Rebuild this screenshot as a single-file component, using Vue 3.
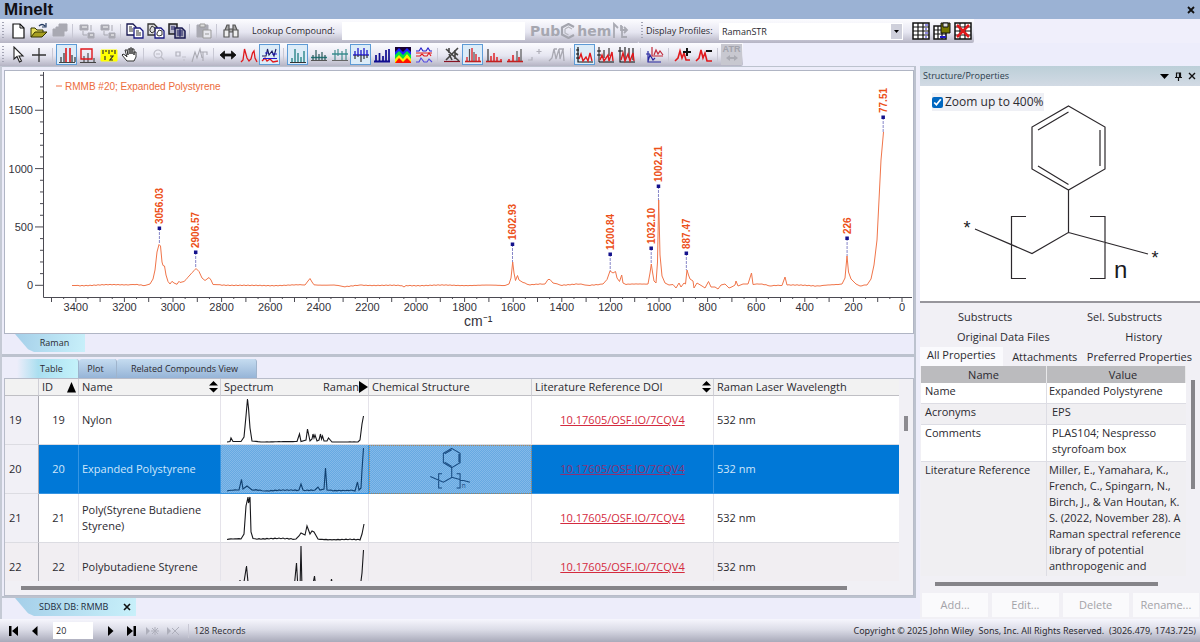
<script setup>
import { ref } from 'vue'

// ---- toolbar icons: each is a list of [path, stroke, fill, stroke width] on an 18 x 18 grid ----
const K = '#111', R = '#e0181c', B = '#2018c8', T = '#1d7f80', G = '#a9a9b2'
const base = (c = '#444') => ['M1 16.5H17', c, 'none', 1]
const icons = {
  new: [['M4 2H11L15 6V16H4Z', K, '#fff', 1.2], ['M11 2V6H15', K, 'none', 1]],
  open: [['M1 15V6H5L7 8H13V11', '#333300', '#e8e060', 1], ['M1 15L5 10H17L12 15Z', '#333300', '#a8a020', 1], ['M9 4Q12 1 15 4M16 1V5H12', '#203860', 'none', 1.2]],
  saveAll: [['M8 2H16V9H13V14H2V7H5V5H8Z', G, G, 1]],
  tree: [['M2 3H10V8H2ZM10 11H16V16H10Z', G, G, 1], ['M13 3V9M5 9V13H9', G, 'none', 1], ['M4 5H9M12 13H15', '#fff', 'none', 1]],
  copy: [['M1 2H7L10 5V13H1Z', '#181850', '#fff', 1.3], ['M8 6H14L17 9V16H8Z', '#181880', '#fff', 1.3], ['M3 5H6M3 7H7M3 9H7M10 9H13M10 11H15M10 13H15', '#333', 'none', 1]],
  copyRound: [['M1 2H7L10 5V13H1Z', '#333', '#ddd', 1.3], ['M8 6H14L17 9V16H8Z', '#181880', '#fff', 1.3], ['M3 7L5 4L8 6V9L5 11L3 9ZM10 11L12 8L15 9V13L12 14L10 13Z', '#333', 'none', 1]],
  copyTable: [['M1 2H9V12H1Z', '#222', '#bbc', 1.5], ['M7 6H14L17 9V16H7Z', '#181850', '#aab', 1.5], ['M3 5H7M3 7H7M9 9H15M9 11H15M9 13H15M12 7V15', '#181860', 'none', 1]],
  paste: [['M2 3H13V15H2Z', G, G, 1], ['M8 8H16V16H8Z', '#999', '#e8e8ee', 1], ['M5 2H10V5H5ZM10 12H14', '#999', '#ddd', 1]],
  find: [['M3 8L5 3H7V8M11 8V3H13L15 8M7 7H11V10H7', '#555', '#aaa', 1.2], ['M2 8H7V15H2ZM11 8H16V15H11Z', '#555', '#eee', 1.2]],
  gridView: [['M1 1H17V17H1Z', K, '#fff', 1.5], ['M1 5H17M1 9H17M1 13H17M6 1V17M11 1V17', K, 'none', 1.2], ['M13 3H16M13 7H15M13 11H16M13 15H15', B, 'none', 1.2]],
  gridSave: [['M1 4H13V17H1Z', K, '#fff', 1.5], ['M1 8H13M1 12H13M5 4V17M9 4V17', K, 'none', 1.2], ['M8 1H17V11H8Z', K, '#777700', 1], ['M10 1H15V5H10Z', K, '#ddd', 1], ['M7 15H13', B, 'none', 2]],
  gridDelete: [['M1 1H17V17H1Z', K, '#fff', 1.5], ['M1 5H17M1 9H17M1 13H17M6 1V17M11 1V17', K, 'none', 1.2], ['M3 3L15 15M15 3L3 15', R, 'none', 2.5]],
  pointer: [['M5 1V13L8 10.500L10.500 16L12.500 15L10 10H14Z', '#222', '#fff', 1.1]],
  cross: [['M9 2V16M2 9H16', '#333', 'none', 1.3]],
  barsRed: [base(), ['M3 16V11M6 16V7M14 16V9M17 16V11', '#333', 'none', 1.2], ['M8 16V2M12 16V2', R, 'none', 1.6]],
  barsBox: [base(), ['M5 16V10M9 16V7M15 16V12', '#333', 'none', 1], ['M2 3H13V13H2Z', R, 'none', 1.4]],
  ruler: [['M1 4H17V15H1Z', '#ffff00', '#ffff00', 1], ['M3 4V8M6 4V6M9 4V8M12 4V6M15 4V8M5 10V14M10 10H13L10 14H13', '#333', 'none', 1.2]],
  hand: [['M4 9L2 8L1 9L6 15H13L15 11V6H13V9V3H11V8V2H9V8V3H7V9L6 4H4L6 11Z', '#333', '#fff', 1]],
  zoomOut: [['M5 8A4 4 0 1 0 13 8A4 4 0 1 0 5 8M12 11L15 14M7 8H11', '#bcbcc6', 'none', 1.2]],
  small: [['M6 6H10V10H6Z', '#b2b2bd', 'none', 1.2], ['M12 11H16M14 13V15', '#c2c2cb', 'none', 1.2]],
  waveGrey: [['M1 16L4 6L6 12L9 3L11 12M9 6H16V9M12 6V15', G, 'none', 1.1]],
  arrows: [['M1 9L5.500 5V8H12.500V5L17 9L12.500 13V10H5.500V13Z', K, K, 0.8]],
  waveRed: [['M1 16L3 14L4.500 3L7 12L9 15L11 13L12.500 7L14 5L15 12L17 16', R, 'none', 1.3]],
  waveMix: [['M1 15L4 12L6 15L9 13L12 16L17 15', R, 'none', 1.3], ['M1 10H5L6.500 3L8 9L11 5L13 10L15 3', '#181860', 'none', 1.1], ['M2 12.500H16M4 7H7M11 8H16', B, 'none', 1.2]],
  barsTeal: [base('#333'), ['M3 16V12M6 16V3M9 16V7M12 16V11M15 16V5', T, 'none', 1.3]],
  barsMid: [['M1 11.500H17', T, 'none', 1.4], ['M3 14V9M6 14V4M9 14V8M12 14V6M15 14V9', '#285858', 'none', 1.2], ['M1 14.500H17', '#555', 'none', 1]],
  barsDown: [['M1 8H17', T, 'none', 1.3], ['M4 4V14M7 3V10M11 5V15M15 3V14', '#3a8788', 'none', 1.1], ['M1 14.500H17', '#666', 'none', 1]],
  barsBlue: [['M1 9H17', B, 'none', 1.4], ['M3 5V9M6 2V9M9 4V9M12 2V9M15 4V9', B, 'none', 1.3], ['M3 9V13M6 9V11M9 9V16M12 9V13M15 9V12', '#333', 'none', 1.2]],
  barsNavy: [['M1 15.500H17', '#100c90', 'none', 2], ['M3 15V9M6.500 15V7M10 15V10M13 15V4M16 15V3', '#100c90', 'none', 1.7]],
  heat: [['M1 1H17V17H1Z', 'none', '#180030', 0], ['M1 17V6L5 2L9 6L13 2L17 6V17Z', 'none', '#2020ff', 0], ['M1 17V9L5 5L9 9L13 5L17 9V17Z', 'none', '#00e040', 0], ['M1 17V13L5 9L9 13L13 8L17 13V17Z', 'none', '#ffee00', 0], ['M1 17L5 12L9 16L13 12L17 16V17Z', 'none', '#ff1000', 0]],
  stack: [['M1 5H4L6 2L8 5H11L13 2L15 5H17', B, 'none', 1.1], ['M1 10H5L7 8L9 10H12L14 7L16 10', R, 'none', 1.2], ['M1 7H17', R, 'none', 1], ['M1 16H4L6 12L9 16H12L14 13L17 16', '#5048e0', 'none', 1.1]],
  noPeaks: [['M1 15.500H17', '#812', 'none', 1.2], ['M3 3L16 15M15 2L3 14M6 2V7M12 7L15 9M6 8L9 14M12 4V13', '#444', 'none', 1.6]],
  peaks1: [['M1 15.500H17', '#c02020', 'none', 1.6], ['M3 15V11M8 15V2M12 15V8M15 15V11', R, 'none', 1.3], ['M5.500 15V3M10 15V6', '#555', 'none', 1.2]],
  peaks2: [['M1 15.500H17', '#c02020', 'none', 1.6], ['M3 15V3', '#333', 'none', 1.2], ['M6 15V10M9 15V7M12 15V11M16 15V13', R, 'none', 1.4]],
  peaks3: [['M1 15.500H17', '#c02020', 'none', 1.6], ['M15 15V3M11 15V5', '#555', 'none', 1.2], ['M3 15V13M7 15V9M13 15V11', R, 'none', 1.5]],
  dotGrey: [['M1 14H5V11M12 3V8M9.500 5.500H14.500', '#b0b0ba', 'none', 1.2]],
  wavesGrey: [['M1 15L4 12L6 3L8 13L11 3L12 13L15 3L16 15M6 3H9M11 3H16', G, 'none', 1.3]],
  scale1: [['M2 1V16H17', K, 'none', 1.2], ['M3 13L5 8L7 15L10 11L12 15L14 7L16 15', R, 'none', 1.4], ['M0 4H3M0 8H3M0 12H3', K, 'none', 1]],
  scale2: [['M2 1V16H17M0 5H4M0 9H4M7 4V12M12 2V10', K, 'none', 1], ['M3 14L5 9L7 15L11 9L12 15L15 6L16 15', R, 'none', 1.4]],
  scale3: [['M2 1V16H17M0 5H5M7 1V13M11 2V12M15 2V14', K, 'none', 1.1], ['M3 14L5 7L7 15L10 8L12 15L15 7L16 15', R, 'none', 1.4]],
  offset: [['M2 5V16H15M2 15L4 9L7 14L9 12M0 8H4', '#2828a0', 'none', 1.2], ['M6 1V10H17M8 9L10 4L12 8L14 5L17 9', '#c02838', 'none', 1.2]],
  addWave: [['M1 15L4 12L6 5L8 12L10 7L12 14H16', R, 'none', 1.6], ['M13 2V10M9 6H17', K, 'none', 2]],
  subWave: [['M1 15L4 12L6 4L8 12L10 7L12 15H17', R, 'none', 1.6], ['M11 5H17', K, 'none', 2]],
}
const topFile = [
  [['New', 'new'], ['Open', 'open'], ['Save all', 'saveAll', 1]],
  [['Expand', 'tree', 1], ['Collapse', 'tree', 1]],
  [['Copy', 'copy'], ['Copy structure', 'copyRound'], ['Copy table', 'copyTable']],
  [['Paste', 'paste', 1]],
  [['Find', 'find']],
]
const topGrid = [['Edit profile', 'gridView'], ['Save profile', 'gridSave'], ['Delete profile', 'gridDelete']]
const tools = [
  [['Select', 'pointer'], ['Crosshair', 'cross']],
  [['Zoom x', 'barsRed', 0, 1], ['Zoom box', 'barsBox'], ['Peak labels', 'ruler'], ['Pan', 'hand']],
  [['Zoom out', 'zoomOut', 1], ['Zoom region', 'small', 1], ['Full range', 'waveGrey', 1]],
  [['Fit width', 'arrows'], ['Spectrum', 'waveRed'], ['Overlay spectra', 'waveMix', 0, 1]],
  [['Bars', 'barsTeal', 0, 1], ['Bars mid', 'barsMid'], ['Bars down', 'barsDown'], ['Mirror', 'barsBlue', 0, 1], ['Solid bars', 'barsNavy'], ['Heat map', 'heat'], ['Stack', 'stack']],
  [['Hide peaks', 'noPeaks'], ['All peaks', 'peaks1', 0, 1], ['Left peaks', 'peaks2'], ['Right peaks', 'peaks3'], ['Add peak', 'dotGrey', 1], ['Match peaks', 'wavesGrey', 1]],
  [['Scale common', 'scale1', 0, 1], ['Scale each', 'scale2'], ['Scale all', 'scale3']],
  [['Offset', 'offset']],
  [['Add spectrum', 'addWave'], ['Remove spectrum', 'subWave']],
]

// ---- chart ----
const px = (v) => 902 - v * 0.243
const py = (v) => 285.3 - v * 0.1167
const xTicks = Array.from({ length: 71 }, (_, i) => i * 50)
const yTicks = Array.from({ length: 19 }, (_, i) => i * 100)
const xLabels = Array.from({ length: 18 }, (_, i) => i * 200)
const yLabels = [0, 500, 1000, 1500]
const peaks = [
  ['3056.03', 3056, 228, 244], ['2906.57', 2906.6, 252, 268], ['1602.93', 1602.9, 244, 262],
  ['1200.84', 1200.8, 254, 271], ['1032.10', 1032.1, 248, 264], ['1002.21', 1002.2, 186, 201],
  ['887.47', 887.5, 253, 270], ['226', 226, 238, 256], ['77.51', 77.5, 117, 132],
]
const trace = [
  72, 285.5, 76, 285.5, 133, 284.5, 145, 285.5, 150, 284, 153, 279, 155, 270, 157, 252, 159, 244.5, 160.5, 246, 162, 262, 163, 265.5, 164.5, 266,
  166, 275, 168, 281.5, 170, 284, 172, 281.3, 174, 283, 177, 284.3, 179, 281.3, 180, 282.5, 184, 281.5, 190, 275, 196, 268.5, 199, 271.5, 202, 278,
  205, 280.5, 209, 277.5, 211, 280, 213, 284.5, 218, 284.7, 250, 285.7, 305, 285, 308, 281, 310, 278.5, 312, 282, 314, 284.8, 334, 285, 343, 286.5,
  360, 285, 402, 285.7, 404, 287, 406, 285.5, 440, 285.3, 480, 285.3, 505, 285.5, 509, 284, 511, 278, 512.7, 262, 514, 273, 515.5, 280.5, 517.5, 275.5, 519, 280,
  523, 282.5, 530, 285, 545, 284, 548, 279.5, 550, 279.5, 553, 283, 560, 285, 581, 284, 590, 285.5, 603, 284, 607, 279.5, 610, 271, 613, 273,
  615.5, 271.5, 617, 278, 619.5, 281.5, 621.7, 275, 623, 283, 626, 284.5, 648, 284, 650, 273, 651.3, 264, 652.5, 272, 654, 281, 656, 283, 657.5, 262,
  658.7, 200, 660, 255, 662, 276, 665, 283, 669, 285, 673, 284.5, 676, 288, 679, 283, 681, 287, 684, 283, 685.5, 284, 687, 270, 688.5, 275, 690, 279,
  693, 281, 694, 288, 697, 283, 702, 286, 705, 288, 708.5, 281.5, 711, 287, 715, 287, 718, 289, 721, 285, 725, 284, 729, 288, 735, 285, 736, 281, 738, 286, 743, 284,
  748, 284, 751.5, 273, 753, 284.5, 762, 284, 770, 286, 782, 285.5, 785, 277, 787, 285, 820, 286, 842, 284, 845, 278, 847, 256, 848.5, 272, 851, 279,
  856, 284, 860, 286, 867, 285, 871, 279, 874, 265, 877, 240, 879, 200, 881, 160, 883.5, 132,
]
const noisy = (pts, amp) => {
  const out = []
  for (let i = 0; i < pts.length; i += 2) {
    const [x, y, nx, ny] = [pts[i], pts[i + 1], pts[i + 2], pts[i + 3]]
    out.push(`${x},${y}`)
    if (nx - x > 5) {
      for (let q = x + 2; q < nx - 1; q += 2) {
        const mid = y + ((ny - y) * (q - x)) / (nx - x)
        out.push(`${q},${(mid + amp * Math.sin(q * 2.3) * Math.cos(q * 0.71)).toFixed(2)}`)
      }
    }
  }
  return out.join(' ')
}
const traceLine = noisy(trace, 0.6)

// ---- results ----
const rows = [
  { id: 19, name: 'Nylon', s: [6, 46, 9, 45.5, 10, 42, 12, 45.5, 20, 45.5, 23, 41, 25, 20, 26.5, 3, 27.5, 12, 29, 32, 31, 45, 40, 46, 76, 45.5, 78.5, 38, 80, 45.5, 85, 44, 86.5, 33, 89, 45, 91, 43, 92, 38, 93, 42, 94, 39, 96, 45, 98, 44, 99.5, 38, 100.5, 43, 101.5, 40, 103, 45, 106, 45, 107.5, 42, 111, 46, 137, 46, 139, 44, 141, 28, 142.5, 20], n: 0.1 },
  { id: 20, name: 'Expanded Polystyrene', s: [6, 46, 18, 45, 20.5, 34.5, 22, 44, 26, 41, 31, 45, 44, 46, 78, 45, 80, 39, 82, 45, 94, 45, 97, 42, 99, 45, 103, 44, 104.5, 23, 106, 45, 112, 46, 130, 45, 134, 46, 136.5, 37, 138, 45, 140, 43, 141, 25, 142.5, 3], n: 0.7, sel: 1 },
  { id: 21, name: 'Poly(Styrene Butadiene Styrene)', s: [6, 45.5, 20, 45, 23, 40, 25, 12, 27, 3, 27.5, 9, 29, 3, 30, 38, 32, 44.5, 75, 45, 78, 42, 80, 39, 84, 41, 86, 32, 89, 40, 91, 37, 93, 38, 97, 45, 139, 46, 141, 40, 143, 30], n: 0.8 },
  { id: 22, name: 'Polybutadiene Styrene', s: [6, 46, 18, 44, 19, 37, 20, 44, 23, 39, 25.5, 23, 27, 39, 29, 46, 73, 46, 75.5, 20, 77, 46, 79, 46, 80, 3, 81, 46, 91, 46, 93.5, 33, 95, 46, 109, 46, 110.5, 36, 112, 46, 139, 46, 141, 30, 142.5, 7], n: 0.3 },
].map((r) => ({ ...r, line: noisy(r.s, r.n) }))

const bonds = 'M1068.500 106L1105 127V169L1068.500 190L1032 169V127ZM1038 130L1068.500 112M1100 130V166M1038 166L1068.500 184.500M1068.500 190V232.500L1032 253.500L975 229M1068.500 232.500L1148 254M1026 216.500H1011.500V278.500H1026M1090 216.500H1105V278.500H1090'

const props = [
  { k: 'Name', v: 'Expanded Polystyrene' },
  { k: 'Acronyms', v: 'EPS', inset: 1 },
  { k: 'Comments', v: 'PLAS104; Nespresso\nstyrofoam box', inset: 1 },
  { k: 'Literature Reference', v: 'Miller, E., Yamahara, K.,\nFrench, C., Spingarn, N.,\nBirch, J., & Van Houtan, K.\nS. (2022, November 28). A\nRaman spectral reference\nlibrary of potential\nanthropogenic and' },
]
const zoomed = ref(true)
const lookup = ref('')
const record = ref('20')
const profile = ref('RamanSTR')
</script>

<template>
  <div class="app">
    <header class="titlebar">
      <h1>MineIt</h1>
      <button class="plain" aria-label="Close window"><svg width="8" height="8" viewBox="0 0 8 8"><path d="M1 1L7 7M7 1L1 7" stroke="#111" stroke-width="1.8" /></svg></button>
    </header>

    <div class="bar">
      <div class="strip file">
        <i class="grip"></i>
        <template v-for="(g, gi) in topFile" :key="gi">
          <i v-if="gi" class="sep"></i>
          <button v-for="b in g" :key="b[0]" class="tool" :aria-label="b[0]" :disabled="!!b[2]">
            <svg width="18" height="18" viewBox="0 0 18 18"><path v-for="(p, i) in icons[b[1]]" :key="i" :d="p[0]" :stroke="p[1]" :fill="p[2]" :stroke-width="p[3]" /></svg>
          </button>
        </template>
        <label class="lookup-label" for="lookup">Lookup Compound:</label>
        <input id="lookup" v-model="lookup" class="lookup" type="text" />
        <button class="pubchem" disabled aria-label="PubChem">
          <span>Pub</span>
          <svg width="17" height="16" viewBox="0 0 17 16"><path d="M14 4L8.500 1L2 4.500V11.500L8.500 15L14 12" fill="none" stroke="#a4a5ae" stroke-width="2.2" /><path d="M5 6V10L8.500 12M5 6L8.500 4L12 6" fill="none" stroke="#b5b6be" stroke-width="1.2" /></svg>
          <span>hem</span>
        </button>
        <button class="tool" disabled aria-label="Molecule search">
          <svg width="18" height="18" viewBox="0 0 18 18"><path d="M3 16V2L7 6M10 3V8H15M11 4V15H16M13 5L16 8L13 11" fill="none" stroke="#a9aab3" stroke-width="1.8" /></svg>
        </button>
      </div>
      <div class="strip">
        <i class="grip"></i>
        <label class="profile-label" for="profile">Display Profiles:</label>
        <div class="select-wrap">
          <select id="profile" v-model="profile"><option>RamanSTR</option></select>
          <span class="drop"><svg width="5" height="3" viewBox="0 0 5 3"><path d="M0 0H5L2.500 3Z" /></svg></span>
        </div>
        <i class="sep wide"></i>
        <button v-for="b in topGrid" :key="b[0]" class="tool" :aria-label="b[0]">
          <svg width="18" height="18" viewBox="0 0 18 18"><path v-for="(p, i) in icons[b[1]]" :key="i" :d="p[0]" :stroke="p[1]" :fill="p[2]" :stroke-width="p[3]" /></svg>
        </button>
      </div>
    </div>

    <div class="bar second">
      <div class="strip">
        <i class="grip"></i>
        <template v-for="(g, gi) in tools" :key="gi">
          <i v-if="gi" class="sep"></i>
          <button v-for="b in g" :key="b[0]" class="tool" :class="{ on: b[3] }" :aria-label="b[0]" :disabled="!!b[2]">
            <svg width="18" height="18" viewBox="0 0 18 18"><path v-for="(p, i) in icons[b[1]]" :key="i" :d="p[0]" :stroke="p[1]" :fill="p[2]" :stroke-width="p[3]" /></svg>
          </button>
        </template>
        <i class="sep"></i>
        <button class="atr" disabled><span>ATR</span><svg width="12" height="6" viewBox="0 0 12 6"><path d="M0 3L4 0V2H8V0L12 3L8 6V4H4V6Z" fill="#aaabb3" /></svg></button>
      </div>
    </div>

    <div class="body">
      <main class="left">
        <div class="frame">
          <section class="plot">
            <svg class="chart" viewBox="5 71 908 262" role="img" aria-label="Raman spectrum">
              <path d="M43.500 72V297.500H912" class="axis" />
              <line v-for="t in xTicks" :key="'x' + t" :x1="px(t)" :x2="px(t)" y1="297" :y2="t % 100 ? 299 : 302" class="axis" />
              <line v-for="t in yTicks" :key="'y' + t" :x1="t % 500 ? 40 : 35" x2="43" :y1="py(t)" :y2="py(t)" class="axis" />
              <text v-for="t in xLabels" :key="'a' + t" :x="px(t)" y="311" text-anchor="middle">{{ t }}</text>
              <text v-for="t in yLabels" :key="'b' + t" x="33" :y="py(t) + 4" text-anchor="end">{{ t }}</text>
              <text x="464" y="326" class="unit">cm⁻¹</text>
              <path d="M56 86H62" class="trace" />
              <text x="65" y="90" class="legend">RMMB #20; Expanded Polystyrene</text>
              <g v-for="p in peaks" :key="p[0]">
                <line :x1="px(p[1])" :x2="px(p[1])" :y1="p[2]" :y2="p[3]" class="stem" />
                <rect :x="px(p[1]) - 1.75" :y="p[2] - 1.5" width="3.5" height="3.5" fill="#14128c" />
                <text :transform="`translate(${px(p[1]) + 3.5} ${p[2] - 4}) rotate(-90)`" class="peak">{{ p[0] }}</text>
              </g>
              <polyline :points="traceLine" class="trace" />
            </svg>
          </section>
          <nav class="tabs-bottom"><button class="tab-slant">Raman</button></nav>
        </div>

        <div class="frame grow">
          <nav class="tabs-top">
            <button class="active">Table</button><button class="plot-tab">Plot</button><button class="related">Related Compounds View</button>
          </nav>
          <section class="results">
            <div class="grid-row">
              <div class="grid-clip">
                <table class="grid">
                  <colgroup><col class="c0" /><col class="c1" /><col class="c2" /><col class="c3" /><col class="c4" /><col class="c5" /><col class="c6" /></colgroup>
                  <thead>
                    <tr>
                      <th></th>
                      <th><div class="hd"><span>ID</span><svg width="9" height="11" viewBox="0 0 9 11"><path d="M4.500 0L9 10.500H0Z" /></svg></div></th>
                      <th><div class="hd"><span>Name</span><svg width="9" height="12" viewBox="0 0 9 12"><path d="M4.500 0L9 4.500H0ZM0 7H9L4.500 11.500Z" /></svg></div></th>
                      <th><div class="hd"><span>Spectrum</span><span class="ram">Raman<svg width="9" height="12" viewBox="0 0 9 12"><path d="M0 0L9 6L0 12Z" /></svg></span></div></th>
                      <th>Chemical Structure</th>
                      <th><div class="hd"><span>Literature Reference DOI</span><svg width="9" height="12" viewBox="0 0 9 12"><path d="M4.500 0L9 4.500H0ZM0 7H9L4.500 11.500Z" /></svg></div></th>
                      <th>Raman Laser Wavelength</th>
                    </tr>
                  </thead>
                  <tbody>
                    <tr v-for="r in rows" :key="r.id" :class="{ sel: r.sel, alt: r.id === 22 }">
                      <td class="rownum">{{ r.id }}</td>
                      <td class="id">{{ r.id }}</td>
                      <td>{{ r.name }}</td>
                      <td class="pic"><svg width="147" height="48" viewBox="0 0 147 48"><polyline :points="r.line" fill="none" :stroke="r.sel ? '#104070' : '#18181c'" stroke-width="1.1" /></svg></td>
                      <td class="pic struct">
                        <svg v-if="r.sel" class="mini" width="60" height="44" viewBox="933 100 256 192"><path :d="bonds" fill="none" stroke="#174a80" stroke-width="4.5" /><text x="1112" y="278" font-size="28" fill="#174a80">n</text></svg>
                      </td>
                      <td class="doi"><a href="#">10.17605/OSF.IO/7CQV4</a></td>
                      <td>532 nm</td>
                    </tr>
                  </tbody>
                </table>
              </div>
              <div class="vtrack"><i class="vthumb"></i></div>
            </div>
            <i class="hthumb"></i>
          </section>
        </div>

        <nav class="doc-tabs">
          <button class="tab-slant doc">SDBX DB: RMMB <svg width="8" height="8" viewBox="0 0 8 8"><path d="M1 1L7 7M7 1L1 7" stroke="#111" stroke-width="1.6" /></svg></button>
        </nav>
      </main>

      <aside class="right">
        <header class="pane-head">
          <h2>Structure/Properties</h2>
          <button class="plain" aria-label="Pane menu"><svg width="9" height="5" viewBox="0 0 9 5"><path d="M0 0H9L4.500 5Z" /></svg></button>
          <button class="plain" aria-label="Pin pane"><svg width="7" height="9" viewBox="0 0 7 9"><path d="M1.500 5.500V1H5.500V5.500M0 5.500H7M3.500 5.500V9M4.500 1V5" fill="none" stroke="#111" stroke-width="1.2" /></svg></button>
          <button class="plain" aria-label="Close pane"><svg width="8" height="8" viewBox="0 0 8 8"><path d="M1 1L7 7M7 1L1 7" stroke="#111" stroke-width="1.4" /></svg></button>
        </header>
        <section class="structure">
          <label class="zoom"><input v-model="zoomed" type="checkbox" />Zoom up to 400%</label>
          <svg class="molecule" viewBox="920 86 280 215" role="img" aria-label="Polystyrene repeat unit">
            <path :d="bonds" fill="none" stroke="#2c282c" stroke-width="1.2" />
            <text x="967" y="234" text-anchor="middle" font-size="18">*</text>
            <text x="1155" y="264" text-anchor="middle" font-size="18">*</text>
            <text x="1114" y="278" font-size="24">n</text>
          </svg>
        </section>
        <div class="pane-tabs">
          <div class="trow first"><button>Substructs</button><button>Sel. Substructs</button></div>
          <div class="trow middle"><button>Original Data Files</button><button>History</button></div>
          <div class="trow last"><button class="on">All Properties</button><button>Attachments</button><button>Preferred Properties</button></div>
        </div>
        <div class="props-row">
          <div class="props-clip">
            <table class="props">
              <colgroup><col class="pk" /><col /></colgroup>
              <thead><tr><th>Name</th><th class="val">Value</th></tr></thead>
              <tbody>
                <tr v-for="p in props" :key="p.k"><td>{{ p.k }}</td><td :class="{ inset: p.inset }">{{ p.v }}</td></tr>
              </tbody>
            </table>
          </div>
          <div class="ptrack"><i></i></div>
        </div>
        <i class="pthumb"></i>
        <div class="actions"><button disabled>Add...</button><button disabled>Edit...</button><button disabled>Delete</button><button disabled>Rename...</button></div>
      </aside>
    </div>

    <footer class="status">
      <button class="nav" aria-label="First record"><svg width="12" height="12" viewBox="0 0 12 12"><path d="M1 1H3.500V11H1ZM10 1V11L4 6Z" /></svg></button>
      <button class="nav" aria-label="Previous record"><svg width="12" height="12" viewBox="0 0 12 12"><path d="M8.500 1V11L3 6Z" /></svg></button>
      <input v-model="record" type="text" aria-label="Record number" />
      <button class="nav" aria-label="Next record"><svg width="12" height="12" viewBox="0 0 12 12"><path d="M4 1V11L9.500 6Z" /></svg></button>
      <button class="nav" aria-label="Last record"><svg width="12" height="12" viewBox="0 0 12 12"><path d="M2 1V11L8 6ZM8.500 1H11V11H8.500Z" /></svg></button>
      <button class="nav" disabled aria-label="Add record"><svg width="14" height="12" viewBox="0 0 14 12"><path d="M1 2V10L5 6Z" fill="#aeafbb" /><path d="M10 2V10M6 6H14M7 3L13 9M13 3L7 9" stroke="#aeafbb" /></svg></button>
      <button class="nav" disabled aria-label="Delete record"><svg width="14" height="12" viewBox="0 0 14 12"><path d="M1 2V10L5 6Z" fill="#aeafbb" /><path d="M6 3L13 10M13 2L6 9" stroke="#aeafbb" /></svg></button>
      <i class="sep"></i>
      <span>128 Records</span>
      <span class="copyright">Copyright © 2025 John Wiley&nbsp; Sons, Inc. All Rights Reserved.&nbsp; (3026.479, 1743.725)</span>
    </footer>
  </div>
</template>

<style>
body { margin: 0; }
</style>

<style scoped>
.app { height: 100vh; display: flex; flex-direction: column; overflow: hidden; background: #ededfa; color: #2b2a30; font: 11px/16px 'Open Sans', 'Noto Sans', sans-serif; }
.app * { box-sizing: border-box; }
.app svg { display: block; flex: none; }
button, input, select { font: inherit; color: inherit; margin: 0; padding: 0; border: 0; border-radius: 0; }
button { background: none; }
.titlebar { flex: none; height: 19px; padding: 0 5px 0 4px; display: flex; align-items: center; justify-content: space-between; background: #9bb2d4; }
.titlebar .plain { padding: 0; }
h1 { margin: 0; font: bold 17px/19px 'Liberation Sans', Arial, sans-serif; color: #101014; }
.plain { display: flex; padding: 2px; }
.bar { flex: none; display: flex; height: 24px; align-items: flex-start; background: #f0effb; }
.bar.second { height: 23px; background: #ededfb; }
.strip { display: flex; align-items: center; height: 24px; padding: 0 1px 0 2px; background: linear-gradient(#fcfcff, #e6e6f1 55%, #b5b4c4); border-radius: 0 0 2px 0; }
.strip.file { padding-right: 9px; }
.second .strip { height: 23px; }
.grip { flex: none; width: 2px; height: 18px; margin: 0 3px 0 0; background: repeating-linear-gradient(#a4a5b5 0 1px, transparent 1px 3px); }
.sep { flex: none; width: 1px; height: 14px; margin: 0 3px; background: #c8c8d4; }
.tool { flex: none; width: 21px; height: 21px; display: flex; align-items: center; justify-content: center; border: 1px solid transparent; }
.tool.on { background: #dcecf8; border-color: #5d9bd6; }
.file .sep { margin: 0 3px 0 2px; }
.lookup-label { margin-left: 11px; font-size: 9px; flex: none; width: 90px; white-space: nowrap; }
.lookup { width: 183px; height: 18px; background: #fff; font-size: 9px; }
.pubchem { display: flex; align-items: center; width: 82px; height: 18px; margin-right: 2px; padding-left: 5px; font: bold 14px/16px 'DejaVu Sans', sans-serif; color: #a6a7b0; }
.profile-label { font-size: 9px; width: 73px; white-space: nowrap; }
.select-wrap { position: relative; width: 184px; height: 17px; background: #fff; }
select { width: 100%; height: 17px; padding-left: 3px; appearance: none; background: #fff; font-size: 9px; }
.drop { position: absolute; top: 1px; right: 1px; width: 11px; height: 15px; display: flex; align-items: center; justify-content: center; background: #cfd0db; pointer-events: none; }
.sep.wide { background: none; }
.atr { width: 21px; height: 21px; display: flex; flex-direction: column; align-items: center; background: #c8c8d0; font: bold 9px/11px 'Liberation Sans', sans-serif; color: #a2a3ac; }
.body { flex: 1; min-height: 0; display: grid; grid-template-columns: minmax(0, 1fr) 280px; column-gap: 4px; }
.left { display: flex; flex-direction: column; min-height: 0; border-left: 2px solid #c5cad5; }
.frame { flex: none; border: solid #bcc2ce; border-width: 1px 2px 1px 0; padding: 3px 0 2px 2px; }
.frame.grow { flex: 1; min-height: 0; display: flex; flex-direction: column; padding: 2px 0 0 2px; border-width: 2px 2px 2px 0; }
.plot { background: #fff; border: 1px solid #b0b5c4; }
.chart { width: 100%; height: auto; font: 11px 'Liberation Sans', Arial, sans-serif; fill: #33323a; }
.axis { stroke: #4b4a52; fill: none; stroke-width: 1; }
.trace { stroke: #f0754a; fill: none; stroke-width: 1; }
.stem { stroke: #8686c8; stroke-dasharray: 3 1; }
.unit { font-size: 14px; }
.legend { fill: #ec6c3c; font-size: 10px; }
.peak { fill: #ec5019; font-size: 10px; font-weight: bold; }
.tabs-bottom { height: 18px; padding-left: 11px; background: #ececfa; }
.tab-slant { height: 18px; width: 70px; padding-left: 9px; font-size: 9px; background: linear-gradient(100deg, #a5cfe9, #c8f0fa); clip-path: polygon(0 0, 100% 0, 100% 100%, 19px 100%, 13px 85%); }
.doc-tabs { flex: none; height: 21px; padding-left: 13px; }
.doc { width: 121px; display: flex; align-items: center; justify-content: space-between; padding: 0 5px 0 24px; color: #1d2c3c; }
.tabs-top { flex: none; display: flex; height: 19px; align-items: stretch; padding-left: 13px; }
.tabs-top button { font-size: 9px; line-height: 16px; border-right: 1px solid #9fb4cc; background: linear-gradient(#c5dcf0, #96b4d7); border-radius: 3px 3px 0 0; }
.tabs-top .active { width: 62px; padding-left: 8px; background: linear-gradient(90deg, #ededfa, #aadff0 35%, #c4f2fa); }
.tabs-top .plot-tab { width: 38px; padding-right: 4px; }
.tabs-top .related { width: 140px; padding-right: 4px; }
.results { flex: 1; min-height: 0; display: flex; flex-direction: column; border: 1px solid #b8bcc9; background: #f1f0f5; padding-bottom: 5px; }
.grid-row { flex: 1; min-height: 0; display: flex; }
.grid-clip { flex: 1; min-width: 0; overflow: hidden; }
.grid { width: 100%; border-collapse: separate; border-spacing: 0; table-layout: fixed; }
.c0 { width: 34px; } .c1 { width: 40px; } .c2 { width: 142px; } .c3 { width: 148px; } .c4 { width: 163px; } .c5 { width: 182px; }
.grid th { height: 17px; padding: 0 2px 0 3px; text-align: left; font-weight: normal; line-height: 16px; background: #f2f2f2; border-right: 1px solid #cfcfd6; border-bottom: 1px solid #bfbfc4; white-space: nowrap; }
.grid th:last-child, .grid td:last-child { border-right: 0; }
.hd { display: flex; justify-content: space-between; align-items: center; }
.ram { display: flex; align-items: center; margin-right: -2px; }
.grid td { height: 49px; padding: 0 8px 0 3px; background: #fff; border-right: 1px solid #e5e3ea; border-bottom: 1px solid #dcdce2; }
.grid .rownum { background: #f1f0f6; border-right-color: #a9a9b2; padding: 0 4px; }
.grid .id { padding: 0; text-align: center; }
.grid .pic { padding: 0; }
.grid .alt td { background: #f1eef2; }
.grid .sel td:not(.rownum) { background: #0078d7; color: #cfe6fa; border-right-color: #3594e2; border-bottom-color: #3594e2; }
.grid .sel .pic.pic { background: repeating-conic-gradient(#66a9e2 0 25%, #84b9e8 0 50%) 0 0 / 2px 2px; }
.grid .sel .struct.struct { outline: 1px dotted #b48a58; outline-offset: -1px; }
.grid .mini { margin: 0 auto; }
.doi.doi { text-align: center; padding: 0; }
.doi a { color: #d42a3e; text-decoration: underline; }
.sel .doi a { color: #8c3274; }
.vtrack { flex: none; width: 14px; padding: 37px 0 0 5px; }
.vthumb { display: block; width: 4px; height: 15px; background: #8c8b90; }
.hthumb { flex: none; height: 4px; margin: 5px 66px 0 16px; background: #858489; }
.right { display: flex; flex-direction: column; min-height: 0; background: #f1f0f5; }
.pane-head { flex: none; height: 20px; display: flex; align-items: center; padding: 0 2px 0 3px; gap: 2px; background: linear-gradient(#bccfd8, #d2dae4); }
h2 { margin: 0 auto 0 0; font-size: 9px; font-weight: normal; color: #2b3d4c; }
.structure { flex: none; position: relative; background: #fff; border-bottom: 2px solid #97969c; }
.molecule { width: 100%; height: auto; font-family: 'Liberation Sans', Arial, sans-serif; fill: #1b1a1e; }
.zoom { position: absolute; left: 12px; top: 7px; height: 18px; display: flex; align-items: center; gap: 2px; padding-right: 1px; background: #eff0f5; white-space: nowrap; font-size: 12px; }
.zoom input { width: 11px; height: 11px; accent-color: #0067c0; }
.pane-tabs { flex: none; padding-top: 4px; }
.trow { display: flex; height: 20px; white-space: nowrap; }
.trow.first { justify-content: space-between; padding: 0 38px; }
.trow.middle { justify-content: space-between; padding: 0 38px 0 37px; }
.trow.last { height: 19px; justify-content: space-between; padding: 0 8px 0 0; }
.trow .on { background: #fafafd; padding: 0 7px 4px; }
.props-row { flex: 1; min-height: 0; display: flex; }
.props-clip { flex: 1; min-width: 0; overflow: hidden; padding-left: 1px; }
.props { width: 100%; border-collapse: separate; border-spacing: 0; table-layout: fixed; }
.pk { width: 126px; }
.props th { height: 17px; padding: 0; line-height: 16px; font-weight: normal; background: #bbbbbe; border-right: 1px solid #e8e8ea; }
.props .val { padding-left: 14px; }
.props td { padding: 0 0 4px 4px; vertical-align: top; white-space: pre; border-right: 1px solid #dddde4; border-bottom: 1px solid #dddde4; background: #fff; }
.props td + td { padding-left: 2px; border-right: 0; }
.props td.inset { padding-left: 5px; }
.props tr:nth-child(even) td { background: #f0eff2; }
.ptrack { flex: none; width: 14px; padding: 14px 0 0 5px; }
.ptrack i { display: block; width: 4px; height: 109px; background: #858489; }
.pthumb { flex: none; height: 4px; margin: 6px 42px 7px 15px; background: #858489; }
.actions { flex: none; display: grid; grid-template-columns: repeat(4, 1fr); gap: 4px; padding: 0 1px 2px 2px; }
.actions button { height: 24px; background: #fafafc; color: #a3a3a8; }
.status { flex: none; height: 23px; display: flex; align-items: center; padding: 0 4px 0 3px; font-size: 9px; background: linear-gradient(#f6f6fd, #dcdde8 45%, #a9aaba); }
.nav { width: 21px; height: 20px; display: flex; align-items: center; justify-content: center; }
.status input { width: 40px; height: 17px; margin: 0 6px 0 8px; padding-left: 3px; background: #fff; }
.status .sep { margin: 0 5px; }
.copyright { margin-left: auto; white-space: nowrap; font-family: 'Noto Sans', 'Open Sans', sans-serif; }
</style>
